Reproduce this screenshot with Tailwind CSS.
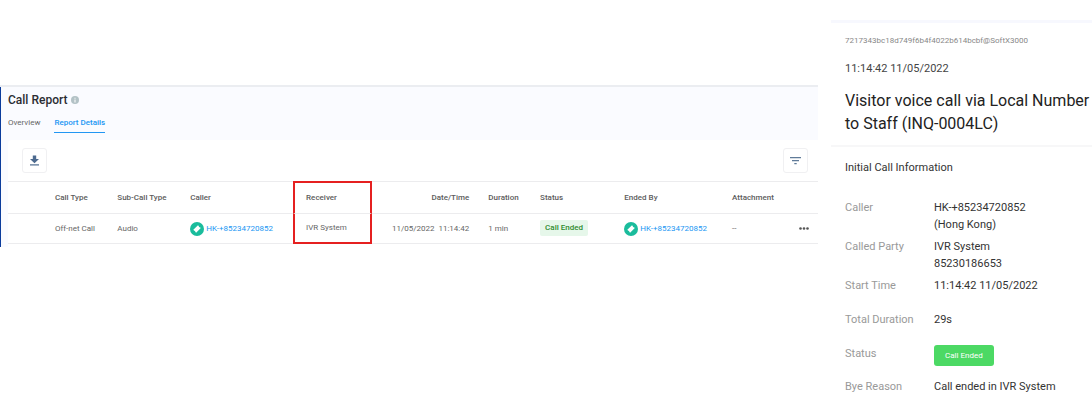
<!DOCTYPE html>
<html lang="en">
<head>
    <meta charset="UTF-8">
    <meta name="viewport" content="width=device-width, initial-scale=1.0">
    <title>Call Report</title>
    <script src="https://cdn.jsdelivr.net/npm/@tailwindcss/browser@4"></script>
</head>
<body class="min-h-screen bg-white font-['Roboto',sans-serif]">
    <div class="flex items-start gap-[13px]">
        <!-- Call report -->
        <main class="mt-[85px] w-3/4 min-w-0 flex-auto border-t-2 border-[#ebedf1] bg-[#fafbff]">
            <div class="border-l border-[#0b3c9c] pl-[7px]">
                <header>
                    <div class="flex items-center gap-1 pt-[5px]">
                        <h1 class="text-[12px] leading-4 font-medium text-[#2b2d33]">Call Report</h1>
                        <svg class="size-2" viewBox="0 0 8 8" aria-hidden="true">
                            <circle cx="4" cy="4" r="4" fill="#b3c2c6"/>
                            <path d="M3.5 1.7h1v1h-1zM3.5 3.4h1v3h-1z" fill="#fff"/>
                        </svg>
                    </div>
                    <nav class="flex gap-[14px] pt-2 pb-[7px] text-[8px] leading-[14px] text-[#666]">
                        <a href="#" class="pb-[2px]">Overview</a>
                        <a href="#" class="border-b border-[#2196f3] pb-[2px] font-medium text-[#2196f3]">Report Details</a>
                    </nav>
                </header>

                <section class="rounded-tl-sm bg-white">
                    <div class="flex items-center justify-between py-2 pr-[10px] pl-[14px]">
                        <button type="button" aria-label="Download" class="flex size-[25px] items-center justify-center rounded-[3px] border border-[#f0f0f2]">
                            <svg class="size-[11px]" viewBox="0 0 11 11" fill="#4d6a8f" aria-hidden="true">
                                <path d="M3.800 0.500h3.400v3.500h2.800L5.500 8.200 1 4h2.800z"/>
                                <path d="M1 9.300h9v1.200H1z"/>
                            </svg>
                        </button>
                        <button type="button" aria-label="Filter" class="flex size-[25px] items-center justify-center rounded-[3px] border border-[#f0f0f2]">
                            <svg class="size-[11px]" viewBox="0 0 11 11" fill="#607b99" aria-hidden="true">
                                <path d="M0 2h11v1.200H0zM2 5h7v1.200H2zM4.300 8h2.400v1.200H4.300z"/>
                            </svg>
                        </button>
                    </div>

                    <table class="w-full table-fixed border-separate border-spacing-0 text-left text-[8px] leading-4 whitespace-nowrap text-[#666]">
                        <colgroup>
                            <col class="w-[5.800%]">
                            <col class="w-[7.700%]">
                            <col class="w-[9%]">
                            <col class="w-[12.700%]">
                            <col class="w-[9.800%]">
                            <col class="w-[14.300%]">
                            <col class="w-[6.400%]">
                            <col class="w-[10.400%]">
                            <col class="w-[13.300%]">
                            <col class="w-[7.800%]">
                            <col class="w-[2.800%]">
                        </colgroup>
                        <thead>
                            <tr class="h-8 text-[#5c5c5c]">
                                <td class="border-t border-[#ececee]"></td>
                                <th class="border-t border-[#ececee] font-medium">Call Type</th>
                                <th class="border-t border-[#ececee] font-medium">Sub-Call Type</th>
                                <th class="border-t border-[#ececee] font-medium">Caller</th>
                                <th class="border-x-2 border-t-2 border-[#e52020] pl-[11px] font-medium">Receiver</th>
                                <th class="border-t border-[#ececee] pr-[19px] text-right font-medium">Date/Time</th>
                                <th class="border-t border-[#ececee] font-medium">Duration</th>
                                <th class="border-t border-[#ececee] font-medium">Status</th>
                                <th class="border-t border-[#ececee] font-medium">Ended By</th>
                                <th class="border-t border-[#ececee] font-medium">Attachment</th>
                                <td class="border-t border-[#ececee]"></td>
                            </tr>
                        </thead>
                        <tbody>
                            <tr class="h-[31px]">
                                <td class="border-y border-[#ececee]"></td>
                                <td class="border-y border-[#ececee]">Off-net Call</td>
                                <td class="border-y border-[#ececee]">Audio</td>
                                <td class="border-y border-[#ececee]">
                                    <a href="#" class="flex items-center gap-[2px] text-[#2196f3]">
                                        <svg class="size-[14px]" viewBox="0 0 14 14" aria-hidden="true">
                                            <circle cx="7" cy="7" r="7" fill="#1abc9c"/>
                                            <path d="M3.300 7.800L8 3.300l.9.900a.8.8 0 0 0 1 1l.9.900L6.100 10.700l-.9-.9a.8.8 0 0 0-1-1z" fill="#fff"/>
                                        </svg>
                                        HK-+85234720852
                                    </a>
                                </td>
                                <td class="border-x-2 border-t border-b-2 border-x-[#e52020] border-t-[#ececee] border-b-[#e52020] pl-[11px]">IVR System</td>
                                <td class="border-y border-[#ececee] pr-[19px] text-right">11/05/2022&nbsp; 11:14:42</td>
                                <td class="border-y border-[#ececee]">1 min</td>
                                <td class="border-y border-[#ececee]">
                                    <span class="inline-block rounded-[2px] bg-[#e6f7ea] px-[5px] align-middle font-medium text-[#2e8b2e]">Call Ended</span>
                                </td>
                                <td class="border-y border-[#ececee]">
                                    <a href="#" class="flex items-center gap-[2px] text-[#2196f3]">
                                        <svg class="size-[14px]" viewBox="0 0 14 14" aria-hidden="true">
                                            <circle cx="7" cy="7" r="7" fill="#1abc9c"/>
                                            <path d="M3.300 7.800L8 3.300l.9.900a.8.8 0 0 0 1 1l.9.900L6.100 10.700l-.9-.9a.8.8 0 0 0-1-1z" fill="#fff"/>
                                        </svg>
                                        HK-+85234720852
                                    </a>
                                </td>
                                <td class="border-y border-[#ececee]">--</td>
                                <td class="border-y border-[#ececee]">
                                    <button type="button" aria-label="More" class="block pl-1">
                                        <svg class="h-[3px] w-[10px]" viewBox="0 0 10 3" fill="#555" aria-hidden="true">
                                            <circle cx="1.500" cy="1.500" r="1.300"/>
                                            <circle cx="5" cy="1.500" r="1.300"/>
                                            <circle cx="8.500" cy="1.500" r="1.300"/>
                                        </svg>
                                    </button>
                                </td>
                            </tr>
                        </tbody>
                    </table>
                    <div class="h-[3px]"></div>
                </section>
            </div>
        </main>

        <!-- Call details -->
        <aside class="mt-5 w-[261px] shrink-0 border-t-3 border-[#f7f8fe] text-[11px] leading-[17px] text-[#333]">
            <header class="border-b-2 border-[#f7f7f8] pt-[11px] pb-[10px] pl-[14px]">
                <p class="text-[8px] leading-[14px] text-[#888]">7217343bc18d749f6b4f4022b614bcbf@SoftX3000</p>
                <p class="pt-3 text-[#444]">11:14:42 11/05/2022</p>
                <h2 class="pt-3 text-[16px] leading-[23px] text-[#222]">Visitor voice call via Local Number to Staff (INQ-0004LC)</h2>
            </header>
            <section class="pl-[14px]">
                <h3 class="pt-3">Initial Call Information</h3>
                <dl class="grid grid-cols-[89px_1fr] pt-[23px]">
                    <dt class="text-[#999]">Caller</dt>
                    <dd class="pb-[5px]">HK-+85234720852<br>(Hong Kong)</dd>
                    <dt class="text-[#999]">Called Party</dt>
                    <dd class="pb-[5px]">IVR System<br>85230186653</dd>
                    <dt class="text-[#999]">Start Time</dt>
                    <dd class="pb-[17px]">11:14:42 11/05/2022</dd>
                    <dt class="text-[#999]">Total Duration</dt>
                    <dd class="pb-[17px]">29s</dd>
                    <dt class="text-[#999]">Status</dt>
                    <dd class="pb-3"><span class="block w-fit rounded-[3px] bg-[#4cd964] px-[11px] text-[8px] leading-[21px] text-white">Call Ended</span></dd>
                    <dt class="text-[#999]">Bye Reason</dt>
                    <dd>Call ended in IVR System</dd>
                </dl>
            </section>
        </aside>
    </div>
</body>
</html>
